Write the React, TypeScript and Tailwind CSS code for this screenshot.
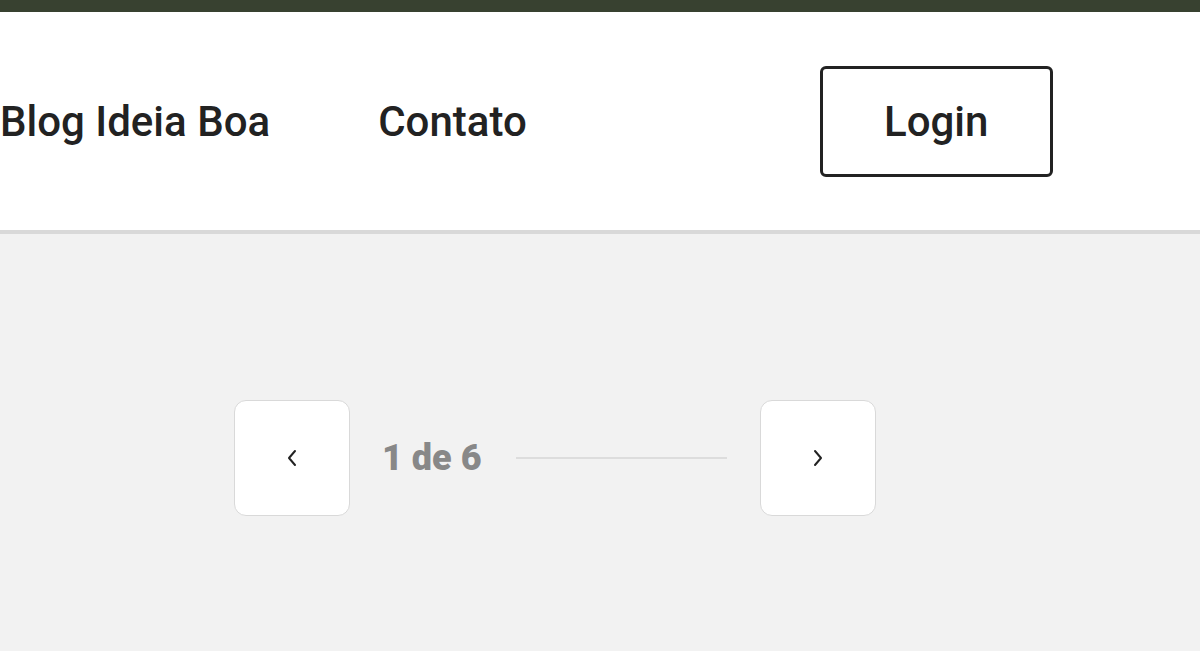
import React from "react";

export default function App() {
  return (
    <div className="min-h-[651px] w-[1200px] bg-[#f2f2f2] overflow-hidden" style={{ fontFamily: "Roboto, 'Liberation Sans', sans-serif" }}>
      <div className="h-[12px] bg-[#384130]" />
      <header className="h-[222px] bg-white border-b-[4px] border-[#d9d9d9] flex items-center">
        <nav className="flex items-center text-[42px] font-medium text-[#222222]">
          <a className="ml-0">Blog Ideia Boa</a>
          <a className="ml-[108px]">Contato</a>
        </nav>
        <button className="ml-[293px] w-[233px] h-[111px] border-[3px] border-[#222222] rounded-[6px] text-[42px] font-medium text-[#222222] flex items-center justify-center">
          Login
        </button>
      </header>
      <main className="pt-[166px] flex justify-start">
        <div className="ml-[234px] flex items-center">
          <button className="w-[116px] h-[116px] bg-white border border-[#d9d9d9] rounded-[12px] flex items-center justify-center">
            <svg width="10" height="18" viewBox="0 0 10 18" fill="none">
              <path d="M8 2L2 9L8 16" stroke="#222" strokeWidth="2" strokeLinecap="round" strokeLinejoin="round" />
            </svg>
          </button>
          <span className="ml-[32px] text-[36px] font-black text-[#888888]">1 de 6</span>
          <div className="ml-[34px] w-[211px] h-[2px] bg-[#dddddd]" />
          <button className="ml-[33px] w-[116px] h-[116px] bg-white border border-[#d9d9d9] rounded-[12px] flex items-center justify-center">
            <svg width="10" height="18" viewBox="0 0 10 18" fill="none">
              <path d="M2 2L8 9L2 16" stroke="#222" strokeWidth="2" strokeLinecap="round" strokeLinejoin="round" />
            </svg>
          </button>
        </div>
      </main>
    </div>
  );
}
